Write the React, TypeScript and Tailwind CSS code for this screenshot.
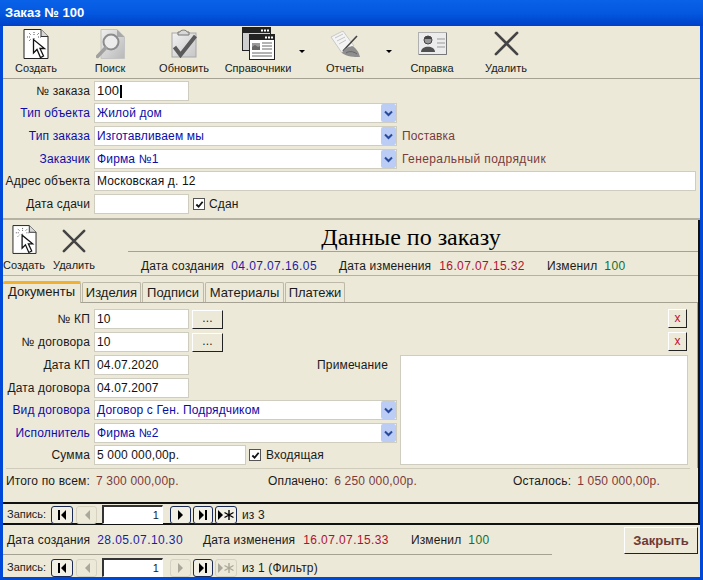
import type { ReactNode } from "react";

function NewDocIcon({ className }: { className?: string }) {
  return (
    <svg viewBox="0 0 26 30" className={className}>
      <path d="M1 .5H18L25 7.5V29.5H1Z" fill="#fff" stroke="#222" />
      <path d="M18 .5V7.5H25" fill="#d8d8d8" stroke="#333" />
      <path d="M11 3v3M11 9v1M4 8h3M15 8h3M6 4l2 2M16 4l-2 2M6 12l2-2" stroke="#555" strokeDasharray="1 1" />
      <path d="M10.5 10.5V24L14 20.5L17.5 28.5L20.5 27L17 19.5H21.5Z" fill="#fff" stroke="#111" strokeWidth="1.3" />
    </svg>
  );
}

function SearchDocIcon() {
  return (
    <svg viewBox="0 0 29 30" className="h-[30px] w-[29px]">
      <defs>
        <linearGradient id="searchDoc" x1="0" y1="0" x2="1" y2="1">
          <stop offset="0" stopColor="#f0f0f0" />
          <stop offset="1" stopColor="#b8b8b8" />
        </linearGradient>
      </defs>
      <path d="M5 0.5H21L28.5 8V29.5H5Z" fill="url(#searchDoc)" stroke="#c4c4c4" />
      <path d="M21 0.5V8H28.5" fill="#a8a8a8" />
      <circle cx="15" cy="13" r="7.5" fill="#ececec" stroke="#8c8c8c" strokeWidth="2" />
      <path d="M9.5 19L1.5 27.5" stroke="#a0a0a0" strokeWidth="3.5" strokeLinecap="round" />
    </svg>
  );
}

function ClipboardIcon() {
  return (
    <svg viewBox="0 0 26 29" className="h-[29px] w-[26px]">
      <defs>
        <linearGradient id="clipBody" x1="0" y1="0" x2="1" y2="1">
          <stop offset="0" stopColor="#f2f2f2" />
          <stop offset="1" stopColor="#c6c6c6" />
        </linearGradient>
      </defs>
      <rect x="1" y="4" width="24" height="24" fill="url(#clipBody)" stroke="#a8a8a8" />
      <path d="M7 6V3H9C9 0.5 16 0.5 16 3H18V6Z" fill="#d8d8d8" stroke="#777" />
      <path d="M3.5 18L9.5 26L24.5 7" fill="none" stroke="#5a5a5a" strokeWidth="4" />
    </svg>
  );
}

function WindowsIcon() {
  return (
    <svg viewBox="0 0 33 33" className="h-[33px] w-[33px]">
      <rect x="0.5" y="0.5" width="28" height="23" fill="#cfcfcf" stroke="#222" />
      <rect x="1" y="1" width="27" height="5" fill="#222" />
      <path d="M19 2.5h2v2h-2zM22 2.5h2v2h-2zM25 2.5h2v2h-2z" fill="#fff" />
      <rect x="7.5" y="7.5" width="25" height="25" fill="#fff" stroke="#222" />
      <rect x="8" y="8" width="24" height="5" fill="#222" />
      <path d="M23 9.5h2v2h-2zM26 9.5h2v2h-2zM29 9.5h2v2h-2z" fill="#fff" />
      <path d="M10 16h8v7h-8z" fill="#999" />
      <path d="M10 20l3-2 3 2 2-1v4h-8z" fill="#666" />
      <path d="M20 16h10M20 19h10M20 22h10M10 26h20M10 29h20" stroke="#666" />
    </svg>
  );
}

function ReportIcon() {
  return (
    <svg viewBox="0 0 31 28" className="h-[28px] w-[31px]">
      <path d="M1 7L13 1L24 16L12 23Z" fill="#f4f4f4" stroke="#c8c8c8" />
      <path d="M5 8L13 4M7 11L15 7M9 14L16 10" stroke="#c4c4c4" />
      <path d="M13 21L27 6" stroke="#444" strokeWidth="1.6" />
      <path d="M12 23C14 18 19 17 22 16C26 18 29 22 30 27C24 27 17 27 12 23Z" fill="#8e8e8e" />
      <path d="M16 23C19 21 23 21 27 24" fill="none" stroke="#666" />
    </svg>
  );
}

function CardIcon() {
  return (
    <svg viewBox="0 0 29 23" className="h-[23px] w-[29px]">
      <rect x="0.5" y="0.5" width="28" height="22" fill="#ececec" stroke="#b0b0b0" />
      <path d="M28.5 1V22.5H1" fill="none" stroke="#777" />
      <circle cx="10" cy="8" r="4" fill="#9a9a9a" stroke="#444" />
      <path d="M6 7C7 3 13 3 14 7Z" fill="#444" />
      <path d="M3 20C3 13 17 13 17 20Z" fill="#505050" />
      <path d="M19 7h8M19 11h8M19 15h8" stroke="#999" />
    </svg>
  );
}

function CrossIcon({ className }: { className?: string }) {
  return (
    <svg viewBox="0 0 26 26" className={className}>
      <path d="M2 2L24 24M24 2L2 24" stroke="#444" strokeWidth="2.8" strokeLinecap="round" />
    </svg>
  );
}

function ToolButton({ label, icon, width = "w-[74px]" }: { label: string; icon: ReactNode; width?: string }) {
  return (
    <div className={`flex shrink-0 flex-col items-center ${width}`}>
      <div className="flex h-[33px] shrink-0 items-center justify-center">{icon}</div>
      <div className="mt-[1px] leading-[14px]">{label}</div>
    </div>
  );
}

function Arrow() {
  return (
    <div className="flex w-[13px] shrink-0 justify-center pt-[23px]">
      <div className="h-0 w-0 border-x-[3px] border-t-[3px] border-x-transparent border-t-black" />
    </div>
  );
}

function Field({ value, className = "", extra }: { value?: string; className?: string; extra?: ReactNode }) {
  return (
    <div className={`flex h-[20px] items-center border border-[#cfcdc0] bg-white pl-[2px] text-[#111] ${className}`}>
      {value}
      {extra}
    </div>
  );
}

function Combo({ value }: { value: string }) {
  return (
    <div className="flex h-[20px] w-[303px] items-center border border-[#cfcdc0] bg-white pl-[2px] text-[#0c0ca8]">
      <span className="flex-1">{value}</span>
      <div className="flex h-[18px] w-[15px] items-center justify-center rounded-[2px] bg-[#bccdf5]">
        <svg viewBox="0 0 9 7" className="h-[7px] w-[9px]">
          <path d="M1 1.5L4.5 5L8 1.5" fill="none" stroke="#284a9c" strokeWidth="2" />
        </svg>
      </div>
    </div>
  );
}

function Row({ label, blue, children, className = "" }: { label: string; blue?: boolean; children: ReactNode; className?: string }) {
  return (
    <div className={`flex h-[20px] items-center ${className}`}>
      <div className={`w-[87px] shrink-0 whitespace-nowrap text-right ${blue ? "text-[#0c0ca8]" : ""}`}>{label}</div>
      <div className="ml-[4px] flex flex-1 items-center">{children}</div>
    </div>
  );
}

function Check() {
  return (
    <div className="flex h-[12px] w-[12px] shrink-0 items-center justify-center border border-[#555] bg-white">
      <svg viewBox="0 0 10 10" className="h-[9px] w-[9px]">
        <path d="M1.5 5L4 7.5L8.5 2" fill="none" stroke="#111" strokeWidth="2" />
      </svg>
    </div>
  );
}

function Tab({ label, active, className = "" }: { label: string; active?: boolean; className?: string }) {
  if (active) {
    return (
      <div className={`relative z-10 -mb-px h-[22px] rounded-t-[2px] border-r border-t-[3px] border-r-[#bdb9a8] border-t-[#f0b030] bg-[#ece9d8] text-center leading-[16px] ${className}`}>
        {label}
      </div>
    );
  }
  return (
    <div className={`h-[20px] rounded-t-[2px] border-x border-t border-[#bdb9a8] bg-[#ece9d8] pt-[2px] text-center leading-[16px] ${className}`}>
      {label}
    </div>
  );
}

type NavState = { first: boolean; prev: boolean; next: boolean; last: boolean; add: boolean };

function NavButton({ enabled, children, className = "w-[22px]" }: { enabled: boolean; children: ReactNode; className?: string }) {
  return (
    <div
      className={`flex h-[18px] items-center justify-center rounded-[3px] border ${className} ${
        enabled ? "border-[#1b2a55] bg-[#f2f0e4] text-black" : "border-[#d5d2c2] bg-[#ece9d8] text-[#b0ae9f]"
      }`}
    >
      {children}
    </div>
  );
}

function RecordNav({ state, tail }: { state: NavState; tail: string }) {
  const c = (on: boolean) => (on ? "#000" : "#aaa89a");
  return (
    <div className="flex h-[19px] items-center pl-[4px]">
      <span className="w-[44px] text-[11px] tracking-normal">Запись:</span>
      <NavButton enabled={state.first}>
        <svg viewBox="0 0 10 10" className="h-[10px] w-[10px]"><path d="M1 0h2v10H1zM9 0v10L4 5z" fill={c(state.first)} /></svg>
      </NavButton>
      <NavButton enabled={state.prev} className="ml-[3px] w-[21px]">
        <svg viewBox="0 0 6 10" className="h-[10px] w-[6px]"><path d="M6 0v10L1 5z" fill={c(state.prev)} /></svg>
      </NavButton>
      <div className="ml-[5px] flex h-[19px] w-[61px] items-center justify-end border border-t-2 border-l-2 border-[#333] border-r-white border-b-white bg-white pr-[3px] text-[11px] leading-none">1</div>
      <NavButton enabled={state.next} className="ml-[7px] w-[21px]">
        <svg viewBox="0 0 6 10" className="h-[10px] w-[6px]"><path d="M0 0v10L5 5z" fill={c(state.next)} /></svg>
      </NavButton>
      <NavButton enabled={state.last} className="ml-[2px] w-[20px]">
        <svg viewBox="0 0 10 10" className="h-[10px] w-[10px]"><path d="M1 0v10L6 5zM7 0h2v10H7z" fill={c(state.last)} /></svg>
      </NavButton>
      <NavButton enabled={state.add} className="ml-[2px] w-[22px]">
        <svg viewBox="0 0 18 10" className="h-[10px] w-[18px]">
          <path d="M1 0v10L6 5z" fill={c(state.add)} />
          <path d="M12 0v10M7.5 2.5l9 5M16.5 2.5l-9 5" stroke={c(state.add)} strokeWidth="1.4" />
        </svg>
      </NavButton>
      <span className="ml-[5px]">{tail}</span>
    </div>
  );
}

function Stamp({ created, changed, by, gap1, gap2 }: { created: string; changed: string; by: string; gap1: string; gap2: string }) {
  return (
    <div className="flex items-center whitespace-nowrap">
      <span>Дата создания</span>
      <span className="ml-[7px] tracking-[0.4px] text-[#1c1ca8]">{created}</span>
      <span className={gap1}>Дата изменения</span>
      <span className="ml-[8px] tracking-[0.4px] text-[#b01030]">{changed}</span>
      <span className={gap2}>Изменил</span>
      <span className="ml-[7px] tracking-[0.4px] text-[#107030]">{by}</span>
    </div>
  );
}

function SmallXButton({ className = "" }: { className?: string }) {
  return (
    <div className={`ml-auto mr-px flex h-[19px] w-[19px] items-center justify-center border border-r-[#222] border-b-[#222] border-l-white border-t-white bg-[#ece9d8] pb-[2px] text-[#c01030] ${className}`}>
      x
    </div>
  );
}

function DotsButton() {
  return (
    <div className="ml-[3px] flex h-[19px] w-[31px] items-center justify-center border border-r-[#222] border-b-[#222] border-l-white border-t-white bg-[#ece9d8] pb-[3px]">
      ...
    </div>
  );
}

function Total({ label, value, className = "" }: { label: string; value: string; className?: string }) {
  return (
    <div className={`whitespace-nowrap ${className}`}>
      {label}
      <span className="ml-[6px] tracking-[0.2px] text-[#7a3b3b]">{value}</span>
    </div>
  );
}

export default function App() {
  return (
    <div className="flex h-[580px] w-[703px] flex-col overflow-hidden font-['Liberation_Sans',sans-serif] text-[12px] tracking-[0.15px] text-[#1a1a1a]">
      <div className="flex h-[26px] shrink-0 items-center bg-gradient-to-b from-[#0a62e8] via-[#0458e0] to-[#0040c8] pl-[5px] text-[13px] font-bold tracking-normal text-white">
        Заказ № 100
      </div>
      <div className="flex min-h-0 flex-1 flex-col border-x-[3px] border-b-[3px] border-x-[#0048d8] border-b-[#0048d0] bg-[#ece9d8]">
        <div className="flex h-[53px] shrink-0 border-b border-[#a5a294] pt-[1px] text-[11px] tracking-normal">
          <div className="mr-[4px]">
            <ToolButton width="w-[66px]" label="Создать" icon={<NewDocIcon className="h-[30px] w-[26px]" />} />
          </div>
          <ToolButton label="Поиск" icon={<SearchDocIcon />} />
          <ToolButton label="Обновить" icon={<ClipboardIcon />} />
          <ToolButton label="Справочники" icon={<WindowsIcon />} />
          <Arrow />
          <ToolButton label="Отчеты" icon={<ReportIcon />} />
          <Arrow />
          <ToolButton label="Справка" icon={<CardIcon />} />
          <ToolButton label="Удалить" icon={<CrossIcon className="h-[25px] w-[25px]" />} />
        </div>

        <div className="flex h-[141px] shrink-0 flex-col gap-[3px] border-b-2 border-[#b5b2a3] pt-[2px]">
          <Row label="№ заказа">
            <Field value="100" className="w-[95px] text-[13px]" extra={<span className="ml-px h-[13px] w-[2px] bg-black" />} />
          </Row>
          <Row label="Тип объекта" blue className="-mt-px">
            <Combo value="Жилой дом" />
          </Row>
          <Row label="Тип заказа" blue>
            <Combo value="Изготавливаем мы" />
            <span className="ml-[5px] text-[#7a3b3b]">Поставка</span>
          </Row>
          <Row label="Заказчик" blue>
            <Combo value="Фирма №1" />
            <span className="ml-[5px] tracking-[0.4px] text-[#7a3b3b]">Генеральный подрядчик</span>
          </Row>
          <Row label="Адрес объекта" className="-mt-px">
            <Field value="Московская д. 12" className="w-[602px]" />
          </Row>
          <Row label="Дата сдачи">
            <Field className="w-[95px]" />
            <div className="ml-[4px]"><Check /></div>
            <span className="ml-[4px]">Сдан</span>
          </Row>
        </div>

        <div className="flex h-[305px] shrink-0 flex-col border-r-2 border-b-2 border-[#111]">
          <div className="flex h-[56px] shrink-0 border-b border-[#b5b2a3] text-[11px] tracking-normal">
            <div className="flex w-[42px] shrink-0 flex-col items-center pt-[5px]">
              <NewDocIcon className="h-[29px] w-[25px]" />
              <div className="mt-[4px] leading-[14px]">Создать</div>
            </div>
            <div className="flex w-[58px] shrink-0 flex-col items-center pt-[9px]">
              <CrossIcon className="h-[24px] w-[24px]" />
              <div className="mt-[5px] leading-[14px]">Удалить</div>
            </div>
            <div className="ml-[25px] flex flex-1 flex-col">
              <div className="h-[33px] border-b border-[#a5a294] pt-[4px] pr-[4px] text-center font-['Liberation_Serif',serif] text-[24px] leading-[26px] text-black">
                Данные по заказу
              </div>
              <div className="mt-[5px] pl-[13px] text-[12px] tracking-[0.15px]">
                <Stamp created="04.07.07.16.05" changed="16.07.07.15.32" by="100" gap1="ml-[22px]" gap2="ml-[22px]" />
              </div>
            </div>
          </div>

          <div className="mt-[5px] flex h-[21px] shrink-0 items-end gap-px text-[13px] tracking-normal">
            <Tab active label="Документы" className="w-[78px]" />
            <Tab label="Изделия" className="w-[59px]" />
            <Tab label="Подписи" className="w-[62px]" />
            <Tab label="Материалы" className="w-[79px]" />
            <Tab label="Платежи" className="w-[60px]" />
          </div>

          <div className="flex h-[166px] shrink-0 border-t border-r border-[#a5a294] pt-[6px]">
            <div className="flex w-[397px] shrink-0 flex-col gap-[3px]">
              <Row label="№ КП">
                <Field value="10" className="w-[95px]" />
                <DotsButton />
              </Row>
              <Row label="№ договора">
                <Field value="10" className="w-[95px]" />
                <DotsButton />
              </Row>
              <Row label="Дата КП">
                <Field value="04.07.2020" className="w-[95px]" />
                <span className="ml-auto pr-[12px]">Примечание</span>
              </Row>
              <Row label="Дата договора">
                <Field value="04.07.2007" className="w-[95px]" />
              </Row>
              <Row label="Вид договора" blue className="-mt-px">
                <Combo value="Договор с Ген. Подрядчиком" />
              </Row>
              <Row label="Исполнитель" blue>
                <Combo value="Фирма №2" />
              </Row>
              <Row label="Сумма" className="-mt-px">
                <Field value="5 000 000,00р." className="w-[152px]" />
                <div className="ml-[3px]"><Check /></div>
                <span className="ml-[5px]">Входящая</span>
              </Row>
            </div>
            <div className="flex flex-1 flex-col pr-[9px]">
              <SmallXButton />
              <SmallXButton className="mt-[4px]" />
              <div className="mt-[4px] h-[110px] border border-[#cfcdc0] bg-white" />
            </div>
          </div>

          <div className="flex h-[34px] shrink-0 items-start pl-[3px]">
            <div className="w-full">
              <div className="h-px w-[684px] bg-[#cfccbc]" />
              <div className="mt-[3px] flex">
                <Total label="Итого по всем:" value="7 300 000,00р." className="w-[262px]" />
                <Total label="Оплачено:" value="6 250 000,00р." className="w-[245px]" />
                <Total label="Осталось:" value="1 050 000,00р." />
              </div>
            </div>
          </div>

          <div className="flex-1 border-t-2 border-[#111] pt-px">
            <RecordNav state={{ first: true, prev: false, next: true, last: true, add: true }} tail="из  3" />
          </div>
        </div>

        <div className="flex h-[30px] shrink-0">
          <div className="flex w-[549px] items-center border-b border-[#a5a294] pl-[4px]">
            <Stamp created="28.05.07.10.30" changed="16.07.07.15.33" by="100" gap1="ml-[20px]" gap2="ml-[22px]" />
          </div>
          <div className="ml-[72px] mt-[2px] flex h-[27px] w-[74px] items-center justify-center border border-r-[#222] border-b-[#222] border-l-white border-t-white bg-[#ece9d8] text-[13px] font-bold tracking-normal text-[#6e3a3a]">
            Закрыть
          </div>
        </div>

        <div className="pt-[3px]">
          <RecordNav state={{ first: true, prev: false, next: false, last: true, add: false }} tail="из  1 (Фильтр)" />
        </div>
      </div>
    </div>
  );
}
